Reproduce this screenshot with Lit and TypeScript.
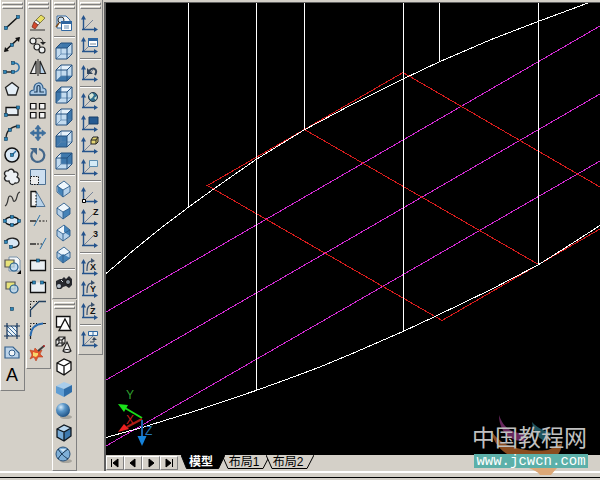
import { LitElement, html, css, svg, TemplateResult } from "lit";
import { customElement, property, state } from "lit/decorators.js";
import { classMap } from "lit/directives/class-map.js";

type Glyph = TemplateResult;
type Tool = { name: string; glyph: Glyph } | null;

const NAVY = "#17365c";
const BLUE = "#2d74ab";
const PALE = "#d9e8f5";

const knot = (x: number, y: number) =>
  svg`<rect x=${x - 1.5} y=${y - 1.5} width="3" height="3" fill="#2c86b8" stroke="#123f5e" stroke-width=".6"/>`;

/* Cube in cabinet projection; one face may be highlighted. */
const faces: Record<string, string> = {
  top: "M3 8L8 3H19L14 8Z",
  bottom: "M3 19L8 14H19L14 19Z",
  left: "M3 8L8 3V14L3 19Z",
  right: "M14 8L19 3V14L14 19Z",
  front: "M3 8H14V19H3Z",
  back: "M8 3H19V14H8Z",
};
const viewCube = (face: string) => svg`
  <path d="M3 8L8 3H19V14L14 19H3Z" fill="#c3dbef"/>
  <path d="M3 8L8 3H19L14 8Z" fill="#e6f1fa"/>
  <path d=${faces[face]} fill="#3f78ac"/>
  <path d="M8 3V14H19M8 14L3 19" fill="none" stroke="#5c87ad" stroke-width=".8"/>
  <path d="M3 8L8 3H19V14L14 19H3ZM3 8H14V19M14 8L19 3" fill="none" stroke="#24507f"/>`;

const isoFaces: Record<string, string> = {
  sw: "M5 8L10 12V19L5 14Z",
  se: "M10 12L17 8V14L10 19Z",
  ne: "M11 3L17 8V14L11 10Z",
  nw: "M5 14L10 10L17 14L10 19Z",
};
const isoCube = (face: string) => svg`
  <path d="M11 3L17 8V14L10 19L4 14V8Z" fill="#b5d1ea"/>
  <path d="M11 3L17 8L10 12L4 8Z" fill="#eef6fc"/>
  <path d=${isoFaces[face]} fill="#4583b8"/>
  <path d="M11 3L17 8V14L10 19L4 14V8ZM4 8L10 12L17 8M10 12V19" fill="none" stroke="#2f5f8c" stroke-width=".9"/>`;

const axes = (extra: Glyph, diagonal = true) => svg`
  ${diagonal ? svg`<path d="M5 17L14 8" stroke="#76849a" fill="none"/>` : svg``}
  <path d="M4.500 18V6M3 17.500H16" stroke="#24538c" stroke-width="1.4" fill="none"/>
  <path d="M4.500 3L7 7.500H2ZM19 17.500L15 15V20Z" fill="#24538c"/>
  ${extra}`;

const letter = (t: string, x: number, y: number, size = 10) =>
  svg`<text x=${x} y=${y} font-size=${size} font-weight="700" fill="#111">${t}</text>`;

const turn = (t: string) => axes(svg`
  <path d="M8 15C8 8 9 5 13 5" stroke="#39506d" stroke-width="1.200" fill="none"/>
  <path d="M12 2L16 5L12 7Z" fill="#39506d"/>${letter(t, 11, 14, 9)}`, false);

const ball = svg`<ellipse cx="13" cy="17" rx="6" ry="2" fill="#a8a59d"/><circle cx="10" cy="10" r="7" fill="url(#ball)"/>`;
const ballDefs = svg`<defs><radialGradient id="ball" cx=".35" cy=".3" r=".75">
  <stop offset="0" stop-color="#d8ecfa"/><stop offset=".4" stop-color="#5b97c9"/><stop offset="1" stop-color="#1d4f82"/>
  </radialGradient></defs>`;
const hexCube = (a: string, b: string, c: string, line: string) => svg`
  <path d="M4 7L11 3L18 6L11 10Z" fill=${a}/><path d="M4 7L11 10V19L4 15Z" fill=${b}/>
  <path d="M11 10L18 6V14L11 19Z" fill=${c}/>
  <path d="M4 7L11 3L18 6V14L11 19L4 15ZM4 7L11 10L18 6M11 10V19" fill="none" stroke=${line} stroke-width="1.300"/>`;

const draw: Tool[] = [
  { name: "Line", glyph: svg`<path d="M5 16L17 5" stroke="#111" stroke-width="1.500"/>${knot(5, 16)}${knot(17, 5)}` },
  { name: "Construction line", glyph: svg`<path d="M4 17L18 4" stroke="#111" stroke-width="1.500"/><path d="M3 18L4 13L8 17ZM19 3L14 4L18 8Z" fill="#111"/>${knot(11, 11)}` },
  { name: "Polyline", glyph: svg`<path d="M4 16H12" stroke="#111" stroke-width="1.300"/><path d="M12 7C20 6 20 16 13 16" fill="none" stroke=${BLUE} stroke-width="1.600"/>${knot(4, 16)}${knot(12, 16)}${knot(12, 7)}` },
  { name: "Polygon", glyph: svg`<path d="M11 4.500L17.500 9.500L15 17H7L4.500 9.500Z" fill="#e4eef6" stroke="#222" stroke-width="1.300"/>` },
  { name: "Rectangle", glyph: svg`<path d="M5 7.500H17V15H5Z" fill="#e8eff5" stroke="#111" stroke-width="1.300"/>${knot(5, 15)}${knot(17, 7.5)}` },
  { name: "Arc", glyph: svg`<path d="M5 17C5 9 9 5 17 4" fill="none" stroke="#222" stroke-width="1.300"/>${knot(5, 17)}${knot(9, 8)}${knot(17, 4.5)}` },
  { name: "Circle", glyph: svg`<circle cx="11" cy="11" r="7" fill=${PALE} stroke="#111" stroke-width="1.500"/><path d="M11 11L15 7" stroke=${BLUE} stroke-width="1.500"/>${knot(11, 11)}` },
  { name: "Revision cloud", glyph: svg`<path d="M7 5C9 2 13 3 13 6C17 5 18 9 16 11C20 13 18 18 14 17C12 20 8 18 8 15C4 16 2 12 5 10C2 8 4 4 7 5Z" fill="#eef1f4" stroke="#222" stroke-width="1.300"/>` },
  { name: "Spline", glyph: svg`<path d="M4 18C8 16 6 8 9 8C13 8 11 15 14 13C17 11 15 5 19 4" fill="none" stroke="#333" stroke-width="1.200"/>` },
  { name: "Ellipse", glyph: svg`<ellipse cx="11" cy="11" rx="7" ry="4" fill=${PALE} stroke="#111" stroke-width="1.300"/>${knot(4, 11)}${knot(18, 11)}${knot(11, 7)}${knot(11, 15)}` },
  { name: "Ellipse arc", glyph: svg`<path d="M5 9C8 5 17 5 18 11C18 15 13 16 10 15" fill=${PALE} stroke="#222" stroke-width="1.300"/>${knot(5, 10)}${knot(10, 15)}` },
  { name: "Insert block", glyph: svg`<path d="M8 3H16L19 6V17H8Z" fill="#f3f6f8" stroke="#7790a8"/><path d="M4 6H13V13H4Z" fill="#e8e37a" stroke="#555" stroke-width="1.200"/><circle cx="13" cy="13" r="4" fill="#b9d7ef" fill-opacity=".8" stroke="#245d8b" stroke-width="1.200"/><path d="M20 16V20H16Z" fill="#000"/>` },
  { name: "Make block", glyph: svg`<path d="M5 6H14V13H5Z" fill="#e8e37a" stroke="#555" stroke-width="1.200"/><circle cx="13" cy="13" r="4" fill="#b9d7ef" fill-opacity=".8" stroke="#245d8b" stroke-width="1.200"/>` },
  { name: "Point", glyph: knot(11, 11) },
  { name: "Hatch", glyph: svg`<path d="M6 6H16V16H6Z" fill="#e8f0f6"/><path d="M6 6L16 16M10 6L16 12M14 6L16 8M6 10L12 16M6 14L8 16" stroke="#3b6c9c"/><path d="M6 3V19M16 3V19M3 6H19M3 16H19" stroke=${NAVY} stroke-width="1.200"/>` },
  { name: "Region", glyph: svg`<path d="M4 5H12L18 11V16H4Z" fill="#bcd3e8" stroke="#315f8c" stroke-width="1.200"/><circle cx="11" cy="11" r="3" fill="#f1f5f8" stroke="#315f8c"/>` },
  { name: "Text", glyph: svg`<text x="5" y="17" font-size="18" fill="#000">A</text>` },
];

const modify: Tool[] = [
  { name: "Erase", glyph: svg`<path d="M3 18H18" stroke="#333"/><path d="M14 3L18 6L13 11L9 8Z" fill="#e8df62" stroke="#6b6330" stroke-width=".8"/><path d="M9 8L13 11L11 13L7 10Z" fill="#f4f4f4" stroke="#555" stroke-width=".8"/><path d="M7 10L11 13L8 17L5 15Z" fill="#d4492d" stroke="#7c3222" stroke-width=".8"/>` },
  { name: "Copy", glyph: svg`<g fill="#eceeee" stroke="#222" stroke-width="1.200"><circle cx="6" cy="7" r="3"/><circle cx="10" cy="13" r="3"/><circle cx="15" cy="16" r="3"/></g><path d="M9 5C13 3 16 5 16 9" fill="none" stroke="#222"/><path d="M13 8H19L16 11Z" fill="#222"/>` },
  { name: "Mirror", glyph: svg`<path d="M3.500 17.500L9 5V17.500Z" fill="#eee" stroke="#222" stroke-width="1.200"/><path d="M18.500 17.500L13 5V17.500Z" fill="#b9d3ea" stroke="#222" stroke-width="1.200"/><path d="M11 3V20" stroke="#222"/>` },
  { name: "Offset", glyph: svg`<path d="M3 17V14C4 12 6 12 7 12C6 3 16 3 16 10C20 11 19 13 19 17Z" fill="#a9c8e4" stroke="#315f8c" stroke-width="1.200"/><path d="M3 17H19M7 14H10V9C10 7 13 7 13 9V14H17" fill="none" stroke="#1b3a59" stroke-width="1.200"/>` },
  { name: "Array", glyph: svg`<g fill="#f4f4f4" stroke="#111" stroke-width="1.200"><path d="M3.500 3.500H9V9H3.500ZM12.500 3.500H18V9H12.500ZM3.500 12.500H9V18H3.500Z"/><path d="M12.500 12.500H18V18H12.500Z"/></g>` },
  { name: "Move", glyph: svg`<path d="M11 3L14 7H12V10H15V8L19 11L15 14V12H12V15H14L11 19L8 15H10V12H7V14L3 11L7 8V10H10V7H8Z" fill="#3e6f9d" stroke="#3e6f9d" stroke-width=".6"/>` },
  { name: "Rotate", glyph: svg`<path d="M6 7A6.500 6.500 0 1 0 12 5" fill="none" stroke="#44678a" stroke-width="2.200"/><path d="M3 4H10V11Z" fill="#44678a"/>` },
  { name: "Scale", glyph: svg`<path d="M3.500 3.500H18.500V18.500H3.500Z" fill="#cddff0" stroke="#4c6f91"/><path d="M3.500 10.500H11.500V18.500H3.500Z" fill="#eee" stroke="#111" stroke-dasharray="1.500 1.200"/>` },
  { name: "Stretch", glyph: svg`<path d="M9 3L18 18.500H9Z" fill="#b9d3ea" stroke="#53779a"/><path d="M4 3.500H9V18.500H4Z" fill="#f4f4f4"/><path d="M9 3.500H4V18.500H9" fill="none" stroke="#111" stroke-width="1.300"/><path d="M9 4V18" stroke="#111" stroke-dasharray="1.500 1.500"/>` },
  { name: "Trim", glyph: svg`<path d="M3 11H9" stroke="#111" stroke-width="1.300"/><path d="M12 11H20" stroke="#111" stroke-dasharray="2 1.500"/><path d="M7 16L13 5" stroke=${BLUE}/>` },
  { name: "Extend", glyph: svg`<path d="M3 12H9" stroke="#111" stroke-width="1.300"/><path d="M10 12H15" stroke="#111" stroke-dasharray="2 1.500"/><path d="M13 17L19 6" stroke=${BLUE}/>` },
  { name: "Break at point", glyph: svg`<path d="M3.500 6.500H18.500V16.500H3.500Z" fill="#e9eef2" stroke="#111" stroke-width="1.300"/>${knot(11, 6.5)}` },
  { name: "Break", glyph: svg`<path d="M7 6.500H3.500V16.500H18.500V6.500H15" fill="#e9eef2" stroke="#111" stroke-width="1.300"/>${knot(7, 6.5)}${knot(15, 6.5)}` },
  { name: "Chamfer", glyph: svg`<path d="M3.500 10V3.500H10" stroke="#111" fill="none" stroke-dasharray="1.500 1.500"/><path d="M3.500 19V12L12 3.500H19" stroke="#23405f" fill="none" stroke-width="1.300"/>` },
  { name: "Fillet", glyph: svg`<path d="M3.500 10V3.500H10" stroke="#111" fill="none" stroke-dasharray="1.500 1.500"/><path d="M3.500 19V15M14 3.500H19" stroke="#222" stroke-width="1.200"/><path d="M3.500 16C4 8 8 4 16 3.500" stroke="#2b6cb0" fill="none" stroke-width="1.800"/>` },
  { name: "Explode", glyph: svg`<path d="M3 8L7 9L8 6L11 9L15 8L13 12L16 15L11 15L9 19L7 15L3 17L5 13Z" fill="#e2552c" stroke="#b8401f" stroke-width=".6"/><path d="M6 10L9 11L11 11L11 13L9 15L6 14Z" fill="#f7d66b"/><path d="M11 9L17 4" stroke="#3f3f3f" stroke-width="2"/><circle cx="17" cy="4" r="1" fill="#a22"/>` },
];

const view: Tool[] = [
  { name: "Named views", glyph: svg`<path d="M4 4H13L17 8V16H4Z" fill="#f4f6f8" stroke="#2f66a0"/><circle cx="8" cy="8" r="3" fill="#cfe2f2" stroke="#333"/><path d="M6 11L3 15" stroke="#7a4b1d" stroke-width="1.500"/><path d="M8.500 9.500H18.500V18.500H8.500Z" fill="#fff" stroke="#2f66a0"/><path d="M8 9H19V12H8Z" fill="#2f66a0"/><path d="M11 14H16M11 16H16" stroke="#6b8fb3"/>` },
  null,
  { name: "Top view", glyph: viewCube("top") },
  { name: "Bottom view", glyph: viewCube("bottom") },
  { name: "Left view", glyph: viewCube("left") },
  { name: "Right view", glyph: viewCube("right") },
  { name: "Front view", glyph: viewCube("front") },
  { name: "Back view", glyph: viewCube("back") },
  null,
  { name: "SW isometric", glyph: isoCube("sw") },
  { name: "SE isometric", glyph: isoCube("se") },
  { name: "NE isometric", glyph: isoCube("ne") },
  { name: "NW isometric", glyph: isoCube("nw") },
  null,
  { name: "Camera", glyph: svg`<path d="M3 9L7 7H9L11 5L13 7L16 4L19 7V13L16 16L13 14L10 15L8 17L4 17L3 13Z" fill="#26282e"/><circle cx="6" cy="14" r="2" fill="#b9c2cc"/><circle cx="15" cy="10" r="2.500" fill="#8d96a0" stroke="#111"/><path d="M8 8L10 10" stroke="#d8dde2"/>` },
];

const shade: Tool[] = [
  { name: "2D wireframe", glyph: svg`<path d="M3.500 4.500H17V15H3.500Z" fill="#fff" stroke="#111" stroke-width="1.300"/><path d="M12 7L18 18.500H6Z" fill="#fff" stroke="#111" stroke-width="1.300"/>` },
  { name: "3D wireframe", glyph: svg`<path d="M3 6L6 3H12V9L9 12H3ZM3 6H9V12M9 6L12 3M6 3V9H12M6 9L3 12" fill="#eee" stroke="#222" stroke-width="1.100"/><path d="M14 8L18 17C16 19 12 19 10 17Z" fill="#eee" stroke="#222" stroke-width="1.100"/><path d="M10 17C12 15 16 15 18 17" fill="none" stroke="#222"/>` },
  { name: "Hidden", glyph: hexCube("#fff", "#fff", "#fff", "#111") },
  { name: "Flat shaded", glyph: svg`<path d="M3 8L11 4L19 7L11 11Z" fill="#a9cdeb"/><path d="M3 8L11 11V19L3 15Z" fill="#5f9dd3"/><path d="M11 11L19 7V14L11 19Z" fill="#2f6da8"/>` },
  { name: "Gouraud shaded", glyph: svg`${ballDefs}${ball}` },
  { name: "Flat shaded, edges on", glyph: hexCube("#b9d7ef", "#76abd8", "#3e79ae", "#101820") },
  { name: "Gouraud shaded, edges on", glyph: svg`<ellipse cx="13" cy="17" rx="6" ry="2" fill="#a8a59d"/><circle cx="10" cy="10" r="7" fill="#7fb0d8" stroke="#2a5078"/><path d="M5 5C9 11 12 13 15 15M15 5C11 8 7 11 5 15" stroke="#173450" fill="none"/><path d="M7 5L10 8L13 5Z" fill="#cfe5f6"/>` },
];

const ucs: Tool[] = [
  { name: "UCS", glyph: axes(svg``) },
  { name: "Display UCS dialog", glyph: axes(svg`<path d="M9.500 5.500H18.500V12.500H9.500Z" fill="#fff" stroke="#2f66a0"/><path d="M9 4H19V7H9Z" fill="#2f66a0"/><path d="M11 10H17" stroke="#789"/>`) },
  null,
  { name: "UCS previous", glyph: axes(svg`<path d="M10 9C15 4 19 8 16 13" fill="none" stroke="#34465c" stroke-width="2"/><path d="M8 6V12H14Z" fill="#34465c"/>`) },
  null,
  { name: "World UCS", glyph: axes(svg`<circle cx="14" cy="7" r="4.500" fill="#2e6f8e" stroke="#24384b"/><path d="M10 5L13 3L15 5L13 8L11 9ZM15 8L18 6L17 10Z" fill="#d5e5d5"/>`) },
  { name: "Object UCS", glyph: axes(svg`<path d="M10 5H19V12H10Z" fill="#265b92" stroke="#173f68"/>`) },
  { name: "Face UCS", glyph: axes(svg`<path d="M12 6L14 3H19V8L17 10H12Z" fill="#e4d573" stroke="#222"/><path d="M12 6H17V10M17 6L19 3" stroke="#222" fill="none"/>`) },
  { name: "View UCS", glyph: axes(svg`<path d="M10.500 4.500H18.500V10.500H10.500Z" fill="#d5ebf6" stroke="#5d8dae"/>`) },
  null,
  { name: "Origin UCS", glyph: svg`${axes(svg``)}<path d="M3.500 15.500H6.500V18.500H3.500Z" fill="#fff" stroke="#000"/>` },
  { name: "Z axis vector UCS", glyph: axes(letter("Z", 14, 9, 9)) },
  { name: "3 point UCS", glyph: axes(letter("3", 14, 9, 9)) },
  null,
  { name: "X axis rotate UCS", glyph: turn("X") },
  { name: "Y axis rotate UCS", glyph: turn("Y") },
  { name: "Z axis rotate UCS", glyph: turn("Z") },
  null,
  { name: "Apply UCS", glyph: axes(svg`<path d="M9.500 3.500H18.500V7.500H9.500ZM14 3V8" fill="#eef4f8" stroke="#2f66a0"/><path d="M11 14H15V11" stroke="#34465c" fill="none"/><path d="M13 12L15 9L18 12Z" fill="#34465c"/>`) },
];

@customElement("tool-palette")
class ToolPalette extends LitElement {
  @property({ attribute: false }) tools: Tool[] = [];
  @property() name = "";

  static styles = css`
    :host { display: block; width: 25px; box-sizing: border-box; padding: 2px 0 4px;
      background: #d4d0c8; border: solid; border-width: 0 1px 1px; border-color: #fff #808080 #808080 #fff; }
    .grip { display: grid; gap: 1px; padding: 0 1px 3px; }
    .grip span { height: 3px; box-sizing: border-box; border: 1px solid; border-color: #fff #808080 #808080 #fff; }
    .tool { display: block; width: 22px; height: 22px; padding: 0; border: 0; background: none; }
    .tool:hover { background: #e4e1da; }
    svg { display: block; font-family: "Liberation Sans", Arial, sans-serif; }
    .rule { height: 2px; margin: 2px 1px; box-sizing: border-box;
      border-top: 1px solid #808080; border-bottom: 1px solid #fff; }
  `;

  render() {
    return html`<div role="toolbar" aria-label=${this.name} aria-orientation="vertical">
      <div class="grip"><span></span><span></span></div>
      ${this.tools.map((t) =>
        t
          ? html`<button class="tool" aria-label=${t.name}>
              <svg width="22" height="22" viewBox="0 0 22 22">${t.glyph}</svg>
            </button>`
          : html`<div class="rule"></div>`
      )}
    </div>`;
  }
}

@customElement("model-space")
class ModelSpace extends LitElement {
  static styles = css`
    :host { display: block; min-height: 0; overflow: hidden; background: #000; }
    svg { display: block; width: 100%; height: 100%; }
    .lines { fill: none; stroke-width: 1; shape-rendering: crispEdges; }
    .white { stroke: #fff; }
    .magenta { stroke: #d32bd3; }
    .red { stroke: #d81c1c; }
    .axis { font: 12px "Liberation Sans", Arial, sans-serif; }
  `;

  render() {
    return html`<svg viewBox="106 3 494 452" preserveAspectRatio="xMinYMin slice" role="img" aria-label="Model space">
      <g class="lines">
        <path class="magenta" d="M106 312L600 26M106 380L600 94M106 446L600 161"/>
        <path class="red" d="M600 187L403 72.500L207.500 185.500L442 320.500L600 229M304.500 129.500L538.500 264.500"/>
        <path class="white" d="M106 273.500L135 249L161 228L188 207.500L213 189.500L256 159.500L304 130L350 105.500L403 79L439 62L490 40L538 21.500L588 3"/>
        <path class="white" d="M106 437.500L142 427.500L200 409.500L256 390.500L285 380L320 367L350 354.500L403 331.500L435 316.500L490 290L538 265L565 248L600 225.500"/>
        <path class="white" d="M188.500 3V207M256.500 3V391M304.500 3V130M403.500 3V332M439.500 3V62M538.500 3V265"/>
      </g>
      <g>
        <path d="M142 418L125 408" stroke="#19dc19" stroke-width="2"/>
        <path d="M118 404L128 405L124 412Z" fill="#19e019"/>
        <path d="M142 419L127 427" stroke="#a81c14" stroke-width="2"/>
        <path d="M118 432L124 424L129 429Z" fill="#ee2020"/>
        <path d="M142 420V438" stroke="#1d66ac" stroke-width="2"/>
        <path d="M137.500 436H146.500L142 446Z" fill="#1583dc"/>
        <text class="axis" x="126" y="399" fill="#2fa02f">Y</text>
        <text class="axis" x="126" y="424" fill="#c81c1c">X</text>
        <text class="axis" x="145" y="435" fill="#2277bb">Z</text>
      </g>
    </svg>`;
  }
}

@customElement("app-root")
class AppRoot extends LitElement {
  @state() private active = 0;

  static styles = css`
    :host { display: flex; flex-direction: column; min-height: 100vh; box-sizing: border-box;
      position: relative; overflow: hidden; background: #d4d0c8;
      font-family: "Liberation Sans", "Noto Sans CJK SC", sans-serif; }
    .work { flex: 1; display: flex; min-height: 0; }
    .docks { flex: none; display: flex; align-items: flex-start; gap: 1px; }
    .stack { display: flex; flex-direction: column; gap: 1px; }
    .window { flex: 1; min-width: 0; display: flex; flex-direction: column;
      margin-top: 2px; border-left: 2px solid #606060; border-top: 1px solid #606060; margin-left: 1px; }
    model-space { flex: 1 1 0; }
    .bar { flex: none; display: flex; align-items: flex-start; height: 16px; overflow: hidden; }
    .nav { display: flex; padding-top: 1px; }
    .nav button { width: 18px; height: 14px; padding: 0; box-sizing: border-box; background: #d4d0c8;
      border: 1px solid; border-color: #fff #808080 #808080 #fff; display: grid; place-items: center; }
    .tabs { display: flex; padding-left: 3px; }
    .tab { position: relative; width: 48px; height: 15px; margin-right: -4px; padding: 0 4px 0 0; border: 0;
      background: none; font: 12px/13px "Liberation Sans", "Noto Sans CJK SC", sans-serif; color: #000;
      white-space: nowrap; }
    .tab svg { position: absolute; inset: 0; width: 100%; height: 100%; }
    .tab span { position: relative; }
    .tab path { fill: #d4d0c8; stroke: #000; }
    .first { width: 44px; margin-right: -3px; }
    .on { color: #fff; font-weight: 700; z-index: 1; }
    .on path { fill: #000; }
    .foot { flex: none; height: 9px; box-sizing: border-box; display: flex; flex-direction: column; }
    .foot::before { content: ""; height: 4px; border-top: 2px solid #fff; border-bottom: 0; }
    .foot::after { content: ""; border-top: 1px solid #000; }
    .mark { position: absolute; right: 12px; bottom: 5px; width: 116px; height: 60px;
      display: flex; flex-direction: column; justify-content: flex-end; gap: 4px; }
    .mark svg { position: absolute; inset: 0; }
    .title { position: relative; font: 400 23px/27px "Noto Sans CJK SC", sans-serif; color: #c0c0c0; white-space: nowrap; }
    .site { position: relative; margin: 0 0 7px 2px; height: 14px; background: #5cb0a9; color: #fff; text-align: center;
      font: 14px/14px "Liberation Mono", monospace; text-decoration: none; white-space: nowrap; }
  `;

  private arrows = [
    { name: "First tab", d: "M3.500 1V9M10 1V9L5 5Z" },
    { name: "Previous tab", d: "M9 1V9L4 5Z" },
    { name: "Next tab", d: "M5 1V9L10 5Z" },
    { name: "Last tab", d: "M4 1V9L9 5ZM10.500 1V9" },
  ];

  render() {
    return html`
      <main class="work">
        <div class="docks">
          <tool-palette name="Draw" .tools=${draw}></tool-palette>
          <tool-palette name="Modify" .tools=${modify}></tool-palette>
          <div class="stack">
            <tool-palette name="View" .tools=${view}></tool-palette>
            <tool-palette name="Shade" .tools=${shade}></tool-palette>
          </div>
          <tool-palette name="UCS" .tools=${ucs}></tool-palette>
        </div>
        <section class="window">
          <model-space></model-space>
          <div class="bar">
            <div class="nav">
              ${this.arrows.map((a) => html`<button aria-label=${a.name}>
                <svg width="14" height="10" viewBox="0 0 14 10"><path d=${a.d} stroke="#000"/></svg>
              </button>`)}
            </div>
            <div class="tabs" role="tablist">
              ${["模型", "布局1", "布局2"].map((t, i) => html`<button role="tab"
                aria-selected=${this.active === i ? "true" : "false"}
                class=${classMap({ tab: true, first: i === 0, on: this.active === i })}
                @click=${() => (this.active = i)}>
                <svg viewBox="0 0 48 15" preserveAspectRatio="none"><path d="M0 0L6 13.500H41L48 0"/></svg>
                <span>${t}</span>
              </button>`)}
            </div>
          </div>
        </section>
      </main>
      <div class="foot"></div>
      <aside class="mark">
        <svg width="116" height="60" viewBox="472 415 116 60" aria-hidden="true">
          <path d="M499 415C503 427 512 434 523 433L526 441C511 443 499 432 499 415Z" fill="#66265c"/>
          <path d="M532 422C538 429 547 432 552 433L545 441C537 438 533 430 532 422Z" fill="#1f5560"/>
          <path d="M491 430C499 445 520 453 548 450L562 443C561 459 548 463 532 461C509 460 494 448 491 430Z" fill="#8a4c1f"/>
          <path d="M506 458C530 464 550 463 569 455C561 464 555 470 551 475H540C536 469 520 466 506 458Z" fill="#dca877"/>
        </svg>
        <span class="title">中国教程网</span>
        <a class="site" href="#">www.jcwcn.com</a>
      </aside>`;
  }
}
